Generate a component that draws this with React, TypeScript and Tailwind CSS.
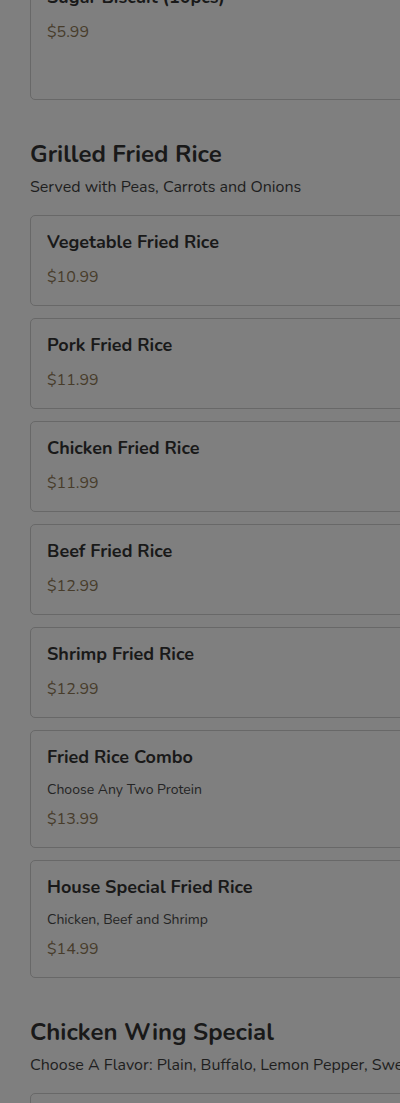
import React from 'react';

type Item = { name: string; desc?: string; price: string };

const friedRice: Item[] = [
  { name: 'Vegetable Fried Rice', price: '$10.99' },
  { name: 'Pork Fried Rice', price: '$11.99' },
  { name: 'Chicken Fried Rice', price: '$11.99' },
  { name: 'Beef Fried Rice', price: '$12.99' },
  { name: 'Shrimp Fried Rice', price: '$12.99' },
  { name: 'Fried Rice Combo', desc: 'Choose Any Two Protein', price: '$13.99' },
  { name: 'House Special Fried Rice', desc: 'Chicken, Beef and Shrimp', price: '$14.99' },
];

function MenuCard({ item, tall }: { item: Item; tall?: boolean }) {
  return (
    <div
      className={`rounded-[5px] border border-[#686868] px-4 pt-[14px] ${tall ? 'pb-[55px]' : 'pb-[16px]'}`}
    >
      <h3 className="text-[18px] leading-[24px] font-bold text-[#191919]">{item.name}</h3>
      {item.desc && (
        <p className="mt-[11px] text-[14px] leading-[20px] text-[#242424]">{item.desc}</p>
      )}
      <p className={`${item.desc ? 'mt-[7px]' : 'mt-[11px]'} text-[16px] leading-[24px] text-[#473c2b]`}>
        {item.price}
      </p>
    </div>
  );
}

function Section({ title, sub, children }: { title: string; sub: string; children: React.ReactNode }) {
  return (
    <section className="mt-10">
      <h2 className="text-[24px] leading-[28px] font-bold text-[#191919]">{title}</h2>
      <p className="mt-[8px] text-[16px] leading-[22px] text-[#1e1e1e] whitespace-nowrap">{sub}</p>
      <div className="mt-[17px] flex flex-col gap-3">{children}</div>
    </section>
  );
}

export default function App() {
  return (
    <div
      className="h-[1103px] w-[400px] overflow-hidden bg-[#7f7f7f]"
      style={{ fontFamily: '"Nunito", "Lato", "Noto Sans", sans-serif' }}
    >
      <div className="w-[620px] pl-[30px] -mt-[30px]">
        <MenuCard item={{ name: 'Sugar Biscuit (10pcs)', price: '$5.99' }} tall />

        <Section title="Grilled Fried Rice" sub="Served with Peas, Carrots and Onions">
          {friedRice.map((it) => (
            <MenuCard key={it.name} item={it} />
          ))}
        </Section>

        <Section
          title="Chicken Wing Special"
          sub="Choose A Flavor: Plain, Buffalo, Lemon Pepper, Sweet Chili, Honey Garlic"
        >
          <MenuCard item={{ name: '6 Pieces Wings', price: '$8.99' }} />
        </Section>
      </div>
    </div>
  );
}
